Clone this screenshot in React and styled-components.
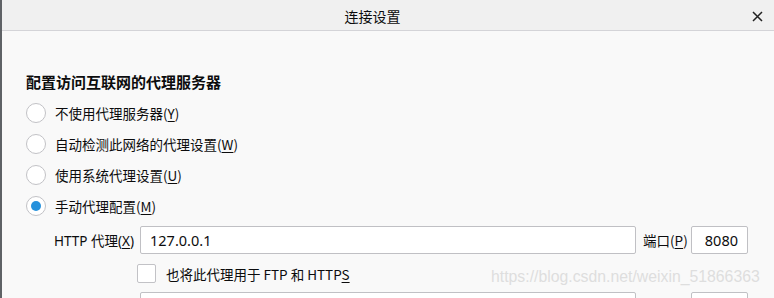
import React from 'react';
import styled, { createGlobalStyle } from 'styled-components';

const GlobalStyle = createGlobalStyle`
  html, body {
    margin: 0;
    padding: 0;
    background: #f9f9f9;
    overflow: hidden;
  }
  body {
    font-family: "Noto Sans", "Noto Sans CJK SC", sans-serif;
    color: #0c0c0d;
  }
`;

const radios = [
  { label: '不使用代理服务器', key: 'Y' },
  { label: '自动检测此网络的代理设置', key: 'W' },
  { label: '使用系统代理设置', key: 'U' },
  { label: '手动代理配置', key: 'M', checked: true },
];

function App() {
  return (
    <>
      <GlobalStyle />
      <Frame>
        <Edge />
        <Dialog>
          <TitleBar>
            <Title>连接设置</Title>
            <Close aria-label="close">
              <svg width="11" height="11" viewBox="0 0 11 11">
                <path d="M1 1 L10 10 M10 1 L1 10" stroke="#222" strokeWidth="1.5" fill="none" />
              </svg>
            </Close>
          </TitleBar>
          <Body>
            <Heading>配置访问互联网的代理服务器</Heading>
            <RadioList>
              {radios.map((r) => (
                <RadioRow key={r.key}>
                  <Radio checked={r.checked} />
                  <span>
                    {r.label}(<u>{r.key}</u>)
                  </span>
                </RadioRow>
              ))}
            </RadioList>
            <ProxyGrid>
              <FieldLabel>
                HTTP 代理(<u>X</u>)
              </FieldLabel>
              <TextBox>127.0.0.1</TextBox>
              <PortLabel>
                端口(<u>P</u>)
              </PortLabel>
              <TextBox $right>8080</TextBox>

              <span />
              <CheckRow>
                <CheckBox />
                <span>
                  也将此代理用于 FTP 和 HTTP<u>S</u>
                </span>
              </CheckRow>
              <span />
              <span />

              <span />
              <TextBox />
              <span />
              <TextBox />
            </ProxyGrid>
          </Body>
        </Dialog>
        <Watermark>https://blog.csdn.net/weixin_51866363</Watermark>
      </Frame>
    </>
  );
}

export default App;

const Frame = styled.div`
  position: relative;
  width: 774px;
  height: 298px;
  display: flex;
  overflow: hidden;
`;

const Edge = styled.div`
  width: 2px;
  flex-shrink: 0;
  background: #5f6266;
`;

const Dialog = styled.div`
  flex: 1;
  display: flex;
  flex-direction: column;
  background: #f9f9f9;
`;

const TitleBar = styled.div`
  height: 32px;
  display: grid;
  grid-template-columns: 1fr 28px 3px;
  align-items: center;
  background: #f0f0f0;
  border-bottom: 1px solid #d4d4d8;
`;

const Title = styled.div`
  text-align: center;
  font-family: "Noto Sans CJK SC", sans-serif;
  font-size: 14px;
  padding-top: 1px;
`;

const Close = styled.div`
  display: flex;
  align-items: center;
  justify-content: center;
  height: 28px;
  margin-top: 2px;
`;

const Body = styled.div`
  padding: 41px 0 0 24px;
  font-family: "Noto Sans CJK SC", sans-serif;
  font-size: 13.5px;
`;

const Heading = styled.div`
  font-size: 15px;
  font-weight: 700;
  line-height: 20px;
`;

const RadioList = styled.div`
  display: flex;
  flex-direction: column;
  margin-top: 5px;
`;

const RadioRow = styled.label`
  height: 31px;
  display: flex;
  align-items: center;
  gap: 9px;
  line-height: 18px;

  u {
    text-underline-offset: 2px;
  }
`;

const Radio = styled.span`
  width: 18px;
  height: 18px;
  border-radius: 50%;
  border: 1px solid #c2c2c6;
  background: #fff;
  display: flex;
  align-items: center;
  justify-content: center;
  flex-shrink: 0;

  &::after {
    content: '';
    width: 10px;
    height: 10px;
    border-radius: 50%;
    background: #2591dc;
    display: ${(p) => (p.checked ? 'block' : 'none')};
  }
`;

const ProxyGrid = styled.div`
  display: grid;
  grid-template-columns: 86px 496px 55px 57px;
  grid-template-rows: 28px 38px 28px;
  margin-top: 5px;
  margin-left: 28px;
  align-items: center;

  u {
    text-underline-offset: 2px;
  }
`;

const FieldLabel = styled.span`
  white-space: nowrap;
  font-family: "Noto Sans", "Noto Sans CJK SC", sans-serif;
`;

const PortLabel = styled.span`
  padding-left: 7px;
  white-space: nowrap;
`;

const TextBox = styled.div`
  box-sizing: border-box;
  height: 28px;
  background: #fff;
  border: 1px solid #c0c0c4;
  border-radius: 2px;
  display: flex;
  align-items: center;
  justify-content: ${(p) => (p.$right ? 'flex-end' : 'flex-start')};
  padding: 0 9px;
  font-family: "Noto Sans", sans-serif;
  font-size: 14.5px;
  align-self: start;
`;

const CheckRow = styled.label`
  display: flex;
  align-items: center;
  gap: 10px;
  margin-left: -3px;
  padding-top: 1px;
`;

const CheckBox = styled.span`
  box-sizing: border-box;
  width: 19px;
  height: 19px;
  border: 1px solid #c2c2c6;
  border-radius: 2px;
  background: #fff;
  flex-shrink: 0;
`;

const Watermark = styled.div`
  position: absolute;
  left: 491px;
  top: 268px;
  font-family: "Liberation Sans", Arial, sans-serif;
  font-size: 15.8px;
  color: #dedede;
  white-space: nowrap;
  pointer-events: none;
`;
